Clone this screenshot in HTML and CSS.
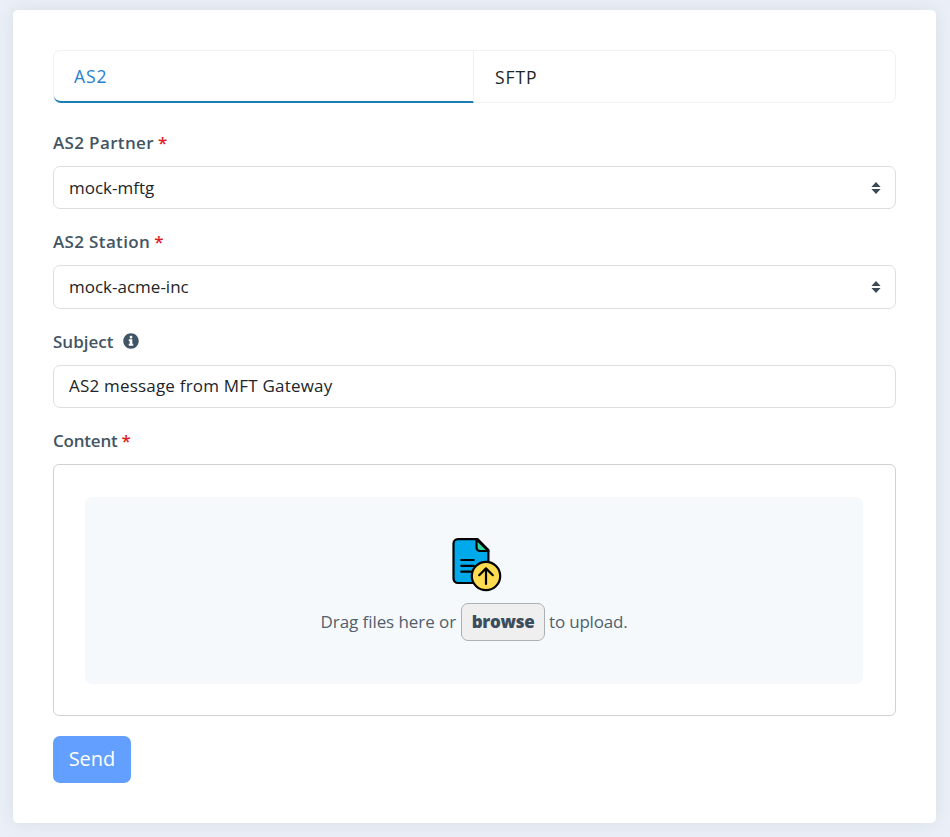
FILE: index.html
```html
<!DOCTYPE html>
<html lang="en">
<head>
    <meta charset="UTF-8">
    <meta name="viewport" content="width=device-width, initial-scale=1.0">
    <title>Send Message</title>
    <link rel="stylesheet" href="styles.css">
</head>
<body>
    <form class="card">
        <div class="tabs">
            <a class="tab active"><span>AS2</span></a>
            <a class="tab"><span>SFTP</span></a>
        </div>

        <div class="field">
            <div class="label"><span class="label-wide">AS2 Partner</span><span class="required">*</span></div>
            <div class="control">
                <span>mock-mftg</span>
                <svg class="caret" width="10" height="12" viewBox="0 0 10 12"><path d="M5 0L9.6 5H.4zM5 12L.4 7h9.2z"/></svg>
            </div>
        </div>

        <div class="field">
            <div class="label"><span class="label-wide">AS2 Station</span><span class="required">*</span></div>
            <div class="control">
                <span>mock-acme-inc</span>
                <svg class="caret" width="10" height="12" viewBox="0 0 10 12"><path d="M5 0L9.6 5H.4zM5 12L.4 7h9.2z"/></svg>
            </div>
        </div>

        <div class="field">
            <div class="label">
                <span>Subject</span>
                <svg class="info" width="16" height="16" viewBox="0 0 512 512"><path d="M256 8C119 8 8 119 8 256s111 248 248 248 248-111 248-248S393 8 256 8zm0 80c24 0 44 20 44 44s-20 44-44 44-44-20-44-44 20-44 44-44zm72 304c0 7-5 12-12 12H196c-7 0-12-5-12-12v-36c0-7 5-12 12-12h18v-82h-18c-7 0-12-5-12-12v-36c0-7 5-12 12-12h90c7 0 12 5 12 12v130h18c7 0 12 5 12 12v36z"/></svg>
            </div>
            <div class="control"><span class="value-subject">AS2 message from MFT Gateway</span></div>
        </div>

        <div class="field">
            <div class="label"><span class="label-content">Content</span><span class="required">*</span></div>
            <div class="upload">
                <div class="dropzone">
                    <svg class="upload-icon" width="52" height="56" viewBox="0 0 52 56" fill="none" stroke="#000" stroke-width="2.2" stroke-linecap="round" stroke-linejoin="round">
                        <path fill="#00a9e9" d="M7 2.1h19.5L37.4 13v33H7a4.5 4.5 0 0 1-4.5-4.5v-35A4.5 4.5 0 0 1 7 2.1z"/>
                        <path fill="#2fd6a3" d="M25.5 2.1L37.4 14H29a3.5 3.5 0 0 1-3.5-3.5z"/>
                        <path d="M10.3 23H22.7M10.3 28.8H22.7M10.3 34.6H20"/>
                        <circle cx="35" cy="39" r="14.2" fill="#ffdb4f"/>
                        <path d="M35 47V31.5M28.2 38.2l6.8-6.8 6.8 6.8"/>
                    </svg>
                    <div class="drop-text">
                        <span class="drop-before">Drag files here or</span>
                        <button type="button" class="browse"><span>browse</span></button>
                        <span class="drop-after">to upload.</span>
                    </div>
                </div>
            </div>
        </div>

        <button type="button" class="send"><span>Send</span></button>
    </form>
</body>
</html>
```

FILE: styles.css
```css
* {
    box-sizing: border-box;
}

body {
    margin: 0;
    padding: 10px 14px 14px 13px;
    height: 837px;
    background-color: #ebf0f8;
    font-family: "Open Sans", "Noto Sans", sans-serif;
    font-size: 17px;
    color: #212529;
    overflow: hidden;
}

.card {
    height: 813px;
    padding: 40px;
    background-color: #fff;
    border-radius: 5px;
    box-shadow: 0 0 18px rgba(150, 160, 165, 0.22);
}

.tabs {
    display: flex;
    height: 53px;
    margin-bottom: 28px;
    border: 1px solid #f0f2f4;
    border-radius: 7px;
}

.tab {
    flex: 1;
    display: flex;
    align-items: center;
    padding-left: 21px;
    font-size: 17.5px;
    letter-spacing: 0.9px;
}

.tab.active {
    flex: 0 0 420px;
    margin-bottom: -1px;
    padding-left: 20px;
    padding-bottom: 1px;
    color: #2680d2;
    border-right: 1px solid #edf1f3;
    border-bottom: 2px solid #1b7db3;
    border-bottom-left-radius: 7px;
}

.field {
    margin-bottom: 21px;
}

.label {
    display: flex;
    align-items: center;
    height: 23px;
    margin-bottom: 12px;
    color: #435564;
    font-weight: 600;
    white-space: nowrap;
}

.label-wide {
    letter-spacing: 0.35px;
}

.label-content {
    letter-spacing: -0.2px;
}

.required {
    margin-left: 4px;
    color: #e01b24;
}

.info {
    margin-left: 10px;
    fill: #3f5465;
}

.control {
    display: flex;
    align-items: center;
    justify-content: space-between;
    height: 43.33px;
    padding: 0 14px 1px 15px;
    border: 1px solid #dcdfe2;
    border-radius: 7px;
    white-space: nowrap;
}

.value-subject {
    letter-spacing: 0.2px;
}

.caret {
    position: relative;
    top: 1px;
    fill: #3c4a57;
}

.upload {
    height: 252px;
    padding: 32px 32px 31px 31px;
    border: 1px solid #cfd1d3;
    border-radius: 6px;
}

.dropzone {
    display: flex;
    flex-direction: column;
    align-items: center;
    height: 187px;
    padding-top: 40px;
    background-color: #f5f9fc;
    border-radius: 7px;
}

.upload-icon {
    margin-left: 6px;
}

.drop-text {
    display: flex;
    align-items: center;
    margin-top: 10px;
    color: #51606d;
    white-space: nowrap;
}

.drop-before {
    letter-spacing: -0.07px;
}

.drop-after {
    letter-spacing: -0.2px;
}

.browse {
    width: 84px;
    height: 38px;
    margin: 0 4px 0 5px;
    padding: 0;
    background-color: #efefef;
    border: 1px solid #abb0b5;
    border-radius: 7px;
    color: #3b4d5c;
    font: 800 17px "Open Sans", "Noto Sans", sans-serif;
    letter-spacing: -0.3px;
}

.send {
    display: block;
    width: 78px;
    height: 47px;
    margin-top: -1px;
    padding: 0 0 2px;
    background-color: #629ffe;
    border: none;
    border-radius: 7px;
    color: #fff;
    font: 500 20px "Open Sans", "Noto Sans", sans-serif;
}
```
